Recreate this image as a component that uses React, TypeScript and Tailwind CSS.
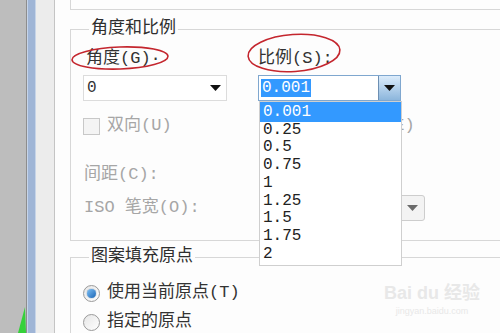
const mono = "font-['Liberation_Mono','Noto_Sans_CJK_SC',monospace]";

const scales = ["0.001", "0.25", "0.5", "0.75", "1", "1.25", "1.5", "1.75", "2"];

function Arrow({ color = "#111" }: { color?: string }) {
  return (
    <svg width="11" height="6" viewBox="0 0 11 6">
      <path d="M0 0h11L5.5 6z" fill={color} />
    </svg>
  );
}

function Radio({ checked }: { checked?: boolean }) {
  return (
    <span className="flex h-[17px] w-[17px] items-center justify-center rounded-full border border-[#9a9a9a] bg-gradient-to-br from-[#e6e6e6] to-white">
      {checked && (
        <span className="h-[9px] w-[9px] rounded-full bg-gradient-to-br from-[#7cc0f5] to-[#1866b5] shadow-[0_0_1px_#0b4b8c]" />
      )}
    </span>
  );
}

export default function App() {
  return (
    <div className={`relative flex h-[333px] w-[500px] overflow-hidden bg-white text-[17px] leading-[20px] text-[#333] ${mono}`}>
      {/* left edge of the window behind */}
      <div className="flex w-[26px] shrink-0 flex-col items-end justify-end bg-[#bdbdbd]">
        <svg width="8" height="26" viewBox="0 0 8 26">
          <path d="M7 0L8 26H0z" fill="#35d13a" />
        </svg>
      </div>
      <div className="w-px shrink-0 bg-[#8d8d8d]" />
      <div className="w-[9px] shrink-0 border-x border-[#c6d4e8] bg-[#9fb5d6]" />
      <div className="w-[18px] shrink-0 bg-[#ececec]" />
      <div className="w-px shrink-0 bg-[#c4c4c4]" />

      <div className="w-[476px] shrink-0 bg-[#fdfdfd] pl-[15px]">
        <div className="h-[10px] w-[460px] border-b border-l border-[#d7d7d7]" />

        <fieldset className="mt-[9px] h-[222px] w-[460px] border border-[#d7d7d7] pl-[12px]">
          <legend className="ml-[6px] px-[2px] text-[#2e2e2e]">角度和比例</legend>
          <div className="mt-[10px] flex h-[20px]">
            <span className="ml-[3px] w-[172px]">角度(G)·</span>
            <span>比例(S):</span>
          </div>
          <div className="mt-[6px] flex h-[26px] gap-[31px]">
            <div className="flex w-[144px] items-center justify-between border border-[#dcdcdc] bg-white pl-[3px] pr-[5px]">
              <span className="text-[16px]">0</span>
              <Arrow />
            </div>
            <div className="flex w-[143px] items-center justify-between border border-[#7fa7cf] bg-white pl-[2px]">
              <span className="bg-[#3399ff] px-px text-[16px] leading-[18px] text-white">0.001</span>
              <span className="flex h-full w-[22px] items-center justify-center border-l border-[#6d8fb3] bg-gradient-to-b from-[#dcecfb] to-[#8cb6dc]">
                <Arrow />
              </span>
            </div>
          </div>
          <div className="mt-[16px] flex h-[18px] items-center text-[#a6a6a6]">
            <span className="h-[17px] w-[17px] shrink-0 border border-[#c8c8c8] bg-[#f4f4f4]" />
            <span className="ml-[7px] w-[175px] shrink-0">双向(U)</span>
            <span className="whitespace-nowrap">相对图纸空间(E)</span>
          </div>
          <div className="mt-[30px] flex h-[20px] items-center pl-px text-[#a6a6a6]">间距(C):</div>
          <div className="mt-[10px] flex h-[26px] items-center pl-px text-[#a6a6a6]">
            <span className="w-[215px] shrink-0">ISO 笔宽(O):</span>
            <div className="flex h-[26px] w-[126px] items-center justify-end rounded-[3px] border border-[#cdcdcd] bg-[#f3f3f3]">
              <span className="flex h-full w-[24px] items-center justify-center border-l border-[#cdcdcd]">
                <Arrow color="#6a6a6a" />
              </span>
            </div>
          </div>
        </fieldset>

        <fieldset className="mt-[6px] h-[120px] w-[460px] border border-[#d7d7d7] pl-[12px]">
          <legend className="ml-[6px] px-[2px] text-[#2e2e2e]">图案填充原点</legend>
          <div className="mt-[16px] flex h-[20px] items-center gap-[7px]">
            <Radio checked />
            <span>使用当前原点(T)</span>
          </div>
          <div className="mt-[9px] flex h-[20px] items-center gap-[7px]">
            <Radio />
            <span>指定的原点</span>
          </div>
        </fieldset>
      </div>

      {/* open drop-down list of the scale combo */}
      <ul className="absolute left-[259px] top-[101px] w-[143px] border border-[#cfcfcf] bg-white pb-[2px] text-[16px] leading-[17.7px] text-[#222]">
        {scales.map((s, i) => (
          <li key={s} className={i === 0 ? "bg-[#3399ff] pl-[3px] pt-[2px] text-white" : "pl-[3px]"}>
            {s}
          </li>
        ))}
      </ul>

      {/* red marks drawn over the screenshot */}
      <svg className="pointer-events-none absolute left-0 top-0" width="500" height="333">
        <ellipse cx="120" cy="58" rx="48" ry="11" fill="none" stroke="#c4262e" strokeWidth="1.6" transform="rotate(-2 120 58)" />
        <ellipse cx="294" cy="53" rx="46" ry="18.5" fill="none" stroke="#c4262e" strokeWidth="1.6" transform="rotate(-4 294 53)" />
      </svg>

      {/* watermark */}
      <div className="pointer-events-none absolute left-[384px] top-[282px] flex flex-col items-center font-['Liberation_Sans','Noto_Sans_CJK_SC',sans-serif] text-[#e8e8e8]">
        <span className="text-[18px] font-bold leading-[22px]">Bai du 经验</span>
        <span className="text-[9px] leading-[14px]">jingyan.baidu.com</span>
      </div>
    </div>
  );
}
